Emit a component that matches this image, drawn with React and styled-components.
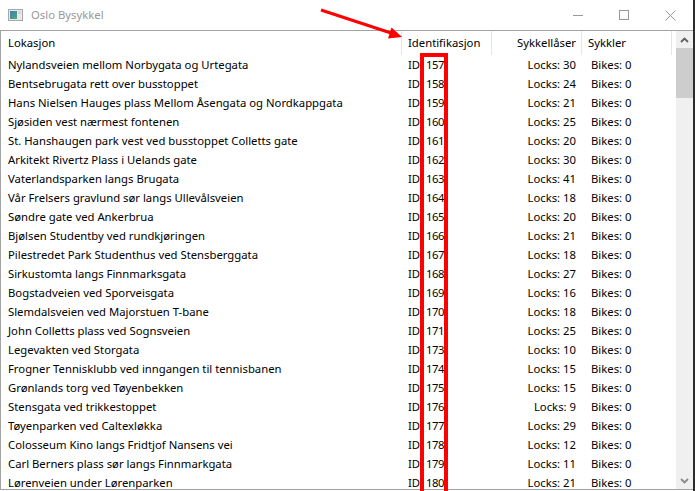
import React from "react";
import styled, { createGlobalStyle } from "styled-components";

const Global = createGlobalStyle`
  html, body { margin: 0; padding: 0; background: #fff; }
  body { font-family: "Noto Sans", "Open Sans", sans-serif; font-size: 11.3px; color: #000; }
`;

const Window = styled.div`
  position: relative;
  width: 693px;
  height: 491px;
  border-right: 2px solid #2b2b2b;
  display: flex;
  flex-direction: column;
  overflow: hidden;
  background: #fff;
`;

const TitleBar = styled.div`
  height: 30px;
  flex-shrink: 0;
  display: flex;
  align-items: center;
  padding-left: 8px;
`;

const Title = styled.span`
  margin-left: 8px;
  color: #999;
  font-size: 11.3px;
  line-height: 30px;
`;

const Controls = styled.div`
  margin-left: auto;
  display: flex;
  height: 100%;
`;

const CtrlButton = styled.div`
  width: 46px;
  height: 100%;
  display: flex;
  align-items: center;
  justify-content: center;
`;

const ListView = styled.div`
  flex: 1;
  min-height: 0;
  display: flex;
  border: 1px solid #a3a3a3;
  border-right: none;
  margin-bottom: 1px;
`;

const Content = styled.div`
  flex: 1;
  min-width: 0;
  display: flex;
  flex-direction: column;
  overflow: hidden;
`;

const columns = "401px 90px 90px 90px 1fr";

const HeaderRow = styled.div`
  display: grid;
  grid-template-columns: ${columns};
  height: 24px;
  flex-shrink: 0;
`;

const HeaderCell = styled.div`
  border-right: ${(p) => (p.$last ? "none" : "1px solid #e5e5e5")};
  line-height: 24px;
  white-space: nowrap;
  overflow: hidden;
  text-align: ${(p) => (p.$right ? "right" : "left")};
  padding: ${(p) => (p.$right ? "0 5px 0 0" : `0 0 0 ${p.$pad ?? 6}px`)};
`;

const Row = styled.div`
  display: grid;
  grid-template-columns: ${columns};
  height: 19px;
  flex-shrink: 0;
  line-height: 19px;
  white-space: nowrap;
`;

const Cell = styled.div`
  overflow: hidden;
  text-align: ${(p) => (p.$right ? "right" : "left")};
  padding: ${(p) => (p.$right ? `0 ${p.$pad ?? 6}px 0 0` : `0 0 0 ${p.$pad ?? 6}px`)};
`;

const IdCell = styled.div`
  display: flex;
  padding-left: 6px;
`;

const IdLabel = styled.span`
  width: 18px;
  flex-shrink: 0;
`;

const IdNumber = styled.span`
  letter-spacing: -0.4px;
`;

const ScrollBar = styled.div`
  width: 17px;
  flex-shrink: 0;
  background: #f0f0f0;
  display: flex;
  flex-direction: column;
`;

const ScrollArrow = styled.div`
  height: 17px;
  flex-shrink: 0;
  display: flex;
  align-items: center;
  justify-content: center;
`;

const Thumb = styled.div`
  height: 50px;
  background: #cdcdcd;
  flex-shrink: 0;
`;

const Track = styled.div`
  flex: 1;
`;

const RedBox = styled.div`
  position: absolute;
  left: 420px;
  top: 53px;
  width: 28px;
  height: 460px;
  border: 4px solid #ff0000;
  box-sizing: border-box;
  pointer-events: none;
`;

const Overlay = styled.svg`
  position: absolute;
  left: 0;
  top: 0;
  pointer-events: none;
`;

const rows = [
  ["Nylandsveien mellom Norbygata og Urtegata", 157, 30],
  ["Bentsebrugata rett over busstoppet", 158, 24],
  ["Hans Nielsen Hauges plass Mellom Åsengata og Nordkappgata", 159, 21],
  ["Sjøsiden vest nærmest fontenen", 160, 25],
  ["St. Hanshaugen park vest ved busstoppet Colletts gate", 161, 20],
  ["Arkitekt Rivertz Plass i Uelands gate", 162, 30],
  ["Vaterlandsparken langs Brugata", 163, 41],
  ["Vår Frelsers gravlund sør langs Ullevålsveien", 164, 18],
  ["Søndre gate ved Ankerbrua", 165, 20],
  ["Bjølsen Studentby ved rundkjøringen", 166, 21],
  ["Pilestredet Park Studenthus ved Stensberggata", 167, 18],
  ["Sirkustomta langs Finnmarksgata", 168, 27],
  ["Bogstadveien ved Sporveisgata", 169, 16],
  ["Slemdalsveien ved Majorstuen T-bane", 170, 18],
  ["John Colletts plass ved Sognsveien", 171, 25],
  ["Legevakten ved Storgata", 173, 10],
  ["Frogner Tennisklubb ved inngangen til tennisbanen", 174, 15],
  ["Grønlands torg ved Tøyenbekken", 175, 15],
  ["Stensgata ved trikkestoppet", 176, 9],
  ["Tøyenparken ved Caltexløkka", 177, 29],
  ["Colosseum Kino langs Fridtjof Nansens vei", 178, 12],
  ["Carl Berners plass sør langs Finnmarkgata", 179, 11],
  ["Lørenveien under Lørenparken", 180, 21],
];

const AppIcon = () => (
  <svg width="15" height="12" viewBox="0 0 15 12">
    <defs>
      <linearGradient id="ig" x1="0" y1="0" x2="1" y2="1">
        <stop offset="0" stopColor="#3f7fbf" />
        <stop offset="1" stopColor="#4fa86f" />
      </linearGradient>
    </defs>
    <rect x="0.5" y="0.5" width="14" height="11" fill="#e8e8e8" stroke="#a8a8a8" />
    <rect x="2" y="2" width="7" height="8" fill="url(#ig)" />
    <rect x="10" y="2" width="3" height="3" fill="#cfd8e0" />
  </svg>
);

export default function App() {
  return (
    <>
      <Global />
      <Window>
        <TitleBar>
          <AppIcon />
          <Title>Oslo Bysykkel</Title>
          <Controls>
            <CtrlButton>
              <svg width="10" height="10" viewBox="0 0 10 10">
                <line x1="0" y1="5.5" x2="10" y2="5.5" stroke="#999" strokeWidth="1" />
              </svg>
            </CtrlButton>
            <CtrlButton>
              <svg width="10" height="10" viewBox="0 0 10 10">
                <rect x="0.5" y="0.5" width="9" height="9" fill="none" stroke="#999" strokeWidth="1" />
              </svg>
            </CtrlButton>
            <CtrlButton>
              <svg width="11" height="11" viewBox="0 0 11 11">
                <path d="M0.5 0.5 L10.5 10.5 M10.5 0.5 L0.5 10.5" stroke="#999" strokeWidth="1" />
              </svg>
            </CtrlButton>
          </Controls>
        </TitleBar>
        <ListView>
          <Content>
            <HeaderRow>
              <HeaderCell $pad={7}>Lokasjon</HeaderCell>
              <HeaderCell $pad={6}>Identifikasjon</HeaderCell>
              <HeaderCell $right>Sykkellåser</HeaderCell>
              <HeaderCell $pad={6}>Sykkler</HeaderCell>
              <HeaderCell $last />
            </HeaderRow>
            {rows.map(([name, id, locks]) => (
              <Row key={id}>
                <Cell $pad={7}>{name}</Cell>
                <IdCell>
                  <IdLabel>ID</IdLabel>
                  <IdNumber>{id}</IdNumber>
                </IdCell>
                <Cell $right $pad={6}>Locks: {locks}</Cell>
                <Cell $pad={9}>Bikes: 0</Cell>
                <Cell />
              </Row>
            ))}
          </Content>
          <ScrollBar>
            <ScrollArrow>
              <svg width="9" height="6" viewBox="0 0 9 6">
                <path d="M1 5 L4.5 1.5 L8 5" fill="none" stroke="#606060" strokeWidth="1.8" />
              </svg>
            </ScrollArrow>
            <Thumb />
            <Track />
            <ScrollArrow>
              <svg width="9" height="6" viewBox="0 0 9 6">
                <path d="M1 1 L4.5 4.5 L8 1" fill="none" stroke="#8a8a8a" strokeWidth="1.8" />
              </svg>
            </ScrollArrow>
          </ScrollBar>
        </ListView>
        <RedBox />
        <Overlay width="695" height="491" viewBox="0 0 695 491">
          <line x1="321" y1="10" x2="391" y2="33" stroke="#ff0000" strokeWidth="3" />
          <polygon points="402,37 388,38.5 391.5,27.5" fill="#ff0000" />
        </Overlay>
      </Window>
    </>
  );
}
